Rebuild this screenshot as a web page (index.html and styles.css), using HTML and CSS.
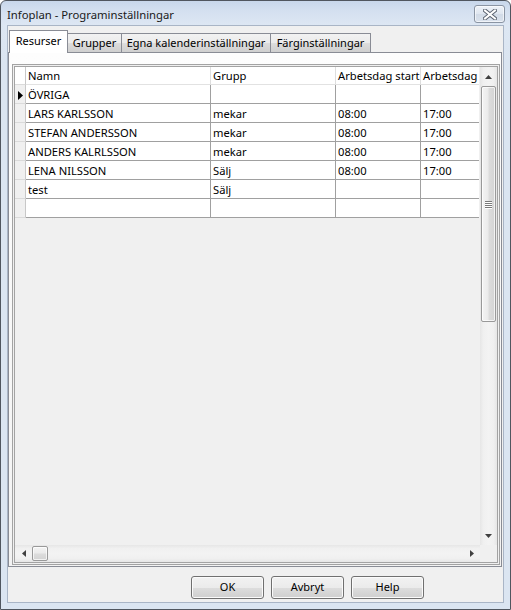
FILE: index.html
```html
<!DOCTYPE html>
<html lang="sv">
<head>
<meta charset="utf-8">
<title>Infoplan - Programinställningar</title>
<link rel="stylesheet" href="styles.css">
</head>
<body>
<div class="window">
  <div class="titlebar">
    <span class="title">Infoplan - Programinställningar</span>
    <div class="close">
      <svg width="14" height="11" viewBox="0 0 14 11">
        <path d="M2 1.5 L12 9.5 M12 1.5 L2 9.5" stroke="#5b6370" stroke-width="4" stroke-linecap="square" fill="none"/>
        <path d="M2 1.5 L12 9.5 M12 1.5 L2 9.5" stroke="#ffffff" stroke-width="2" stroke-linecap="square" fill="none"/>
      </svg>
    </div>
  </div>
  <div class="client">
    <div class="tabs">
      <div class="tab active">Resurser</div>
      <div class="tab w-grupper">Grupper</div>
      <div class="tab w-egna">Egna kalenderinställningar</div>
      <div class="tab w-farg">Färginställningar</div>
    </div>
    <div class="panel">
      <div class="grid">
        <div class="grid-main">
          <div class="table-area">
            <div class="row head">
              <div class="cell rh"></div>
              <div class="cell">Namn</div>
              <div class="cell">Grupp</div>
              <div class="cell">Arbetsdag start</div>
              <div class="cell">Arbetsdag</div>
            </div>
            <div class="row">
              <div class="cell rh current"><svg width="5" height="9" viewBox="0 0 5 9"><polygon points="0,0 5,4.5 0,9" fill="#000"/></svg></div>
              <div class="cell">ÖVRIGA</div>
              <div class="cell"></div>
              <div class="cell"></div>
              <div class="cell"></div>
            </div>
            <div class="row">
              <div class="cell rh"></div>
              <div class="cell">LARS KARLSSON</div>
              <div class="cell">mekar</div>
              <div class="cell">08:00</div>
              <div class="cell">17:00</div>
            </div>
            <div class="row">
              <div class="cell rh"></div>
              <div class="cell">STEFAN ANDERSSON</div>
              <div class="cell">mekar</div>
              <div class="cell">08:00</div>
              <div class="cell">17:00</div>
            </div>
            <div class="row">
              <div class="cell rh"></div>
              <div class="cell">ANDERS KALRLSSON</div>
              <div class="cell">mekar</div>
              <div class="cell">08:00</div>
              <div class="cell">17:00</div>
            </div>
            <div class="row">
              <div class="cell rh"></div>
              <div class="cell">LENA NILSSON</div>
              <div class="cell">Sälj</div>
              <div class="cell">08:00</div>
              <div class="cell">17:00</div>
            </div>
            <div class="row">
              <div class="cell rh"></div>
              <div class="cell">test</div>
              <div class="cell">Sälj</div>
              <div class="cell"></div>
              <div class="cell"></div>
            </div>
            <div class="row">
              <div class="cell rh"></div>
              <div class="cell"></div>
              <div class="cell"></div>
              <div class="cell"></div>
              <div class="cell"></div>
            </div>
          </div>
          <div class="vscroll">
            <div class="sb-btn v-btn">
              <svg width="7" height="4" viewBox="0 0 7 4"><polygon points="0,4 3.5,0 7,4" fill="#404040"/></svg>
            </div>
            <div class="v-track">
              <div class="v-thumb">
                <div class="grip">
                  <span></span><span></span><span></span><span></span>
                </div>
              </div>
            </div>
            <div class="sb-btn v-btn">
              <svg width="7" height="4" viewBox="0 0 7 4"><polygon points="0,0 7,0 3.5,4" fill="#404040"/></svg>
            </div>
          </div>
        </div>
        <div class="hscroll-row">
          <div class="hscroll">
            <div class="sb-btn h-btn">
              <svg width="4" height="7" viewBox="0 0 4 7"><polygon points="4,0 4,7 0,3.5" fill="#404040"/></svg>
            </div>
            <div class="h-track">
              <div class="h-thumb"></div>
            </div>
            <div class="sb-btn h-btn">
              <svg width="4" height="7" viewBox="0 0 4 7"><polygon points="0,0 4,3.5 0,7" fill="#404040"/></svg>
            </div>
          </div>
          <div class="corner"></div>
        </div>
      </div>
    </div>
    <div class="buttons">
      <div class="btn">OK</div>
      <div class="btn">Avbryt</div>
      <div class="btn">Help</div>
    </div>
  </div>
</div>
</body>
</html>
```
FILE: styles.css
```css
* {
  box-sizing: border-box;
}

html,
body {
  margin: 0;
  padding: 0;
}

body {
  width: 511px;
  height: 610px;
  overflow: hidden;
  background: #ffffff;
  font-family: "Noto Sans", "DejaVu Sans", sans-serif;
  font-size: 11px;
  color: #000000;
}

.window {
  width: 511px;
  height: 610px;
  border: 1px solid #50565f;
  border-radius: 6px 6px 0 0;
  background: linear-gradient(#c8d7eb 0, #d4e0f0 10px, #dde7f3 24px, #dbe5f1 60px, #dbe5f1 100%);
  padding: 0 6px 6px 6px;
  display: flex;
  flex-direction: column;
}

.titlebar {
  height: 24px;
  display: flex;
  justify-content: space-between;
  align-items: flex-start;
}

.title {
  font-size: 11.3px;
  line-height: 15px;
  margin-top: 6px;
  color: #1a1a1a;
}

.close {
  width: 31px;
  height: 18px;
  margin-top: 4px;
  margin-right: -1px;
  border: 1px solid #8a94a3;
  border-radius: 3px;
  background: linear-gradient(#eef2f8, #dfe6f0 50%, #d2dbe7 51%, #dae2ed);
  box-shadow: inset 0 0 0 1px rgba(255, 255, 255, 0.6);
  display: flex;
  align-items: center;
  justify-content: center;
}

.client {
  flex: 1;
  background: #f0f0f0;
  border: 1px solid #a9b5c6;
  display: flex;
  flex-direction: column;
}

.tabs {
  height: 26px;
  padding: 4px 0 0 1px;
  display: flex;
  align-items: flex-start;
}

.tab {
  height: 19px;
  margin-top: 3px;
  margin-left: -1px;
  border: 1px solid #898c95;
  border-bottom: none;
  background: linear-gradient(#f2f2f2, #ebebeb 50%, #dddddd 51%, #cfcfcf);
  text-align: center;
  line-height: 15px;
  padding-top: 1px;
  white-space: nowrap;
}

.tab.active {
  position: relative;
  z-index: 1;
  width: 59px;
  height: 23px;
  margin-top: 0;
  margin-left: 0;
  background: #ffffff;
  padding-top: 2px;
}

.w-grupper {
  width: 55px;
}

.w-egna {
  width: 150px;
}

.w-farg {
  width: 101px;
}

.panel {
  height: 515px;
  margin-right: 1px;
  border: 1px solid #898c95;
  background: linear-gradient(#fdfdfd, #f3f3f3);
  padding: 11px 1px 1px 3px;
}

.grid {
  width: 488px;
  height: 501px;
  border: 3px double #a3a3a3;
  background: #f0f0f0;
  display: flex;
  flex-direction: column;
}

.grid-main {
  height: 478px;
  display: flex;
}

.table-area {
  width: 465px;
  background: #f0f0f0;
}

.row {
  display: grid;
  grid-template-columns: 11px 185px 125px 85px 58px;
  height: 19px;
}

.row.head {
  height: 18px;
}

.cell {
  background: #ffffff;
  border-right: 1px solid #a0a0a0;
  border-bottom: 1px solid #a0a0a0;
  padding: 1px 0 0 2px;
  font-size: 11.2px;
  line-height: 17px;
  white-space: nowrap;
  overflow: hidden;
}

.row .cell:last-child {
  border-right: none;
}

.head .cell {
  border-right-color: #dedede;
  border-bottom-color: #e2e2e2;
  padding-top: 0;
  line-height: 17px;
}

.cell.rh {
  background: #f0f0f0;
  border-right-color: #c8c8c8;
  border-bottom-color: #dadada;
  padding: 0;
}

.head .cell.rh {
  background: #ffffff;
}

.cell.current {
  display: flex;
  align-items: center;
  justify-content: center;
  padding: 2px 0 0 1px;
}

.vscroll {
  width: 17px;
  display: flex;
  flex-direction: column;
  background: linear-gradient(to right, #e6e6e6, #f0f0f0 20%, #f3f3f3 50%, #f0f0f0 80%, #e6e6e6);
}

.sb-btn {
  display: flex;
  align-items: center;
  justify-content: center;
}

.v-btn {
  height: 19px;
}

.v-track {
  flex: 1;
  display: flex;
  flex-direction: column;
  align-items: center;
}

.v-thumb {
  width: 15px;
  height: 236px;
  border: 1px solid #999999;
  border-radius: 2px;
  background: linear-gradient(to right, #f4f4f4, #ebebeb 45%, #dcdcdc 55%, #d3d3d3);
  box-shadow: inset 0 0 0 1px rgba(255, 255, 255, 0.7);
  display: flex;
  align-items: center;
  justify-content: center;
}

.grip {
  display: flex;
  flex-direction: column;
  gap: 1px;
}

.grip span {
  display: block;
  width: 7px;
  height: 1px;
  background: #7a7a7a;
  box-shadow: 0 1px 0 #ffffff;
}

.hscroll-row {
  height: 17px;
  display: flex;
}

.hscroll {
  width: 465px;
  display: flex;
  background: linear-gradient(#e6e6e6, #f0f0f0 20%, #f3f3f3 50%, #f0f0f0 80%, #e6e6e6);
}

.h-btn {
  width: 17px;
}

.h-track {
  flex: 1;
  display: flex;
  align-items: center;
}

.h-thumb {
  width: 16px;
  height: 15px;
  border: 1px solid #999999;
  border-radius: 2px;
  background: linear-gradient(#f4f4f4, #ebebeb 45%, #dcdcdc 55%, #d3d3d3);
  box-shadow: inset 0 0 0 1px rgba(255, 255, 255, 0.7);
}

.corner {
  width: 17px;
  background: #f0f0f0;
}

.buttons {
  display: flex;
  gap: 7px;
  margin-top: 9px;
  padding-left: 183px;
}

.btn {
  width: 73px;
  height: 23px;
  border: 1px solid #707070;
  border-radius: 3px;
  background: linear-gradient(#f2f2f2, #ebebeb 50%, #dddddd 51%, #cfcfcf);
  box-shadow: inset 0 0 0 1px #fbfbfb;
  text-align: center;
  line-height: 20px;
}
```
